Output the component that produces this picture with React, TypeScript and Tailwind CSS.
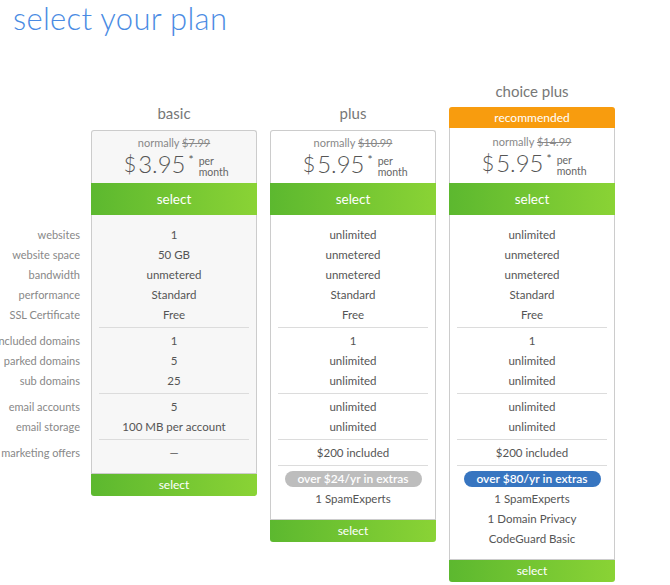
import React from "react";

type Cell = string | { badge: string; color: "gray" | "blue" };

const labels: string[][] = [
  ["websites", "website space", "bandwidth", "performance", "SSL Certificate"],
  ["included domains", "parked domains", "sub domains"],
  ["email accounts", "email storage"],
  ["marketing offers"],
];

const basicRows: Cell[][] = [
  ["1", "50 GB", "unmetered", "Standard", "Free"],
  ["1", "5", "25"],
  ["5", "100 MB per account"],
  ["—"],
];

const plusRows: Cell[][] = [
  ["unlimited", "unmetered", "unmetered", "Standard", "Free"],
  ["1", "unlimited", "unlimited"],
  ["unlimited", "unlimited"],
  ["$200 included"],
  [{ badge: "over $24/yr in extras", color: "gray" }, "1 SpamExperts"],
];

const choiceRows: Cell[][] = [
  ["unlimited", "unmetered", "unmetered", "Standard", "Free"],
  ["1", "unlimited", "unlimited"],
  ["unlimited", "unlimited"],
  ["$200 included"],
  [
    { badge: "over $80/yr in extras", color: "blue" },
    "1 SpamExperts",
    "1 Domain Privacy",
    "CodeGuard Basic",
  ],
];

function Divider() {
  return (
    <div className="h-[6px] pt-[2px] px-[7px]">
      <div className="h-px bg-[#dcdcdc]" />
    </div>
  );
}

function Rows({ groups }: { groups: Cell[][] }) {
  return (
    <div>
      {groups.map((g, gi) => (
        <React.Fragment key={gi}>
          {gi > 0 && <Divider />}
          {g.map((c, ci) =>
            typeof c === "string" ? (
              <div
                key={ci}
                className="h-[20px] flex items-center justify-center text-[11.5px] text-[#555]"
              >
                {c}
              </div>
            ) : (
              <div key={ci} className="h-[20px] flex items-center justify-center">
                <div
                  className={
                    c.color === "gray"
                      ? "w-[137px] h-[16px] rounded-full bg-[#bdbdbd] text-white text-[12px] font-semibold flex items-center justify-center"
                      : "w-[137px] h-[16px] rounded-full bg-[#3775c0] text-white text-[12px] font-semibold flex items-center justify-center"
                  }
                >
                  {c.badge}
                </div>
              </div>
            )
          )}
        </React.Fragment>
      ))}
    </div>
  );
}

function Price({ normal, price }: { normal: string; price: string }) {
  return (
    <div className="flex flex-col items-center">
      <div className="text-[11px] leading-[14px] text-[#888]">
        normally <span className="line-through">{normal}</span>
      </div>
      <div className="flex items-start mt-[1px] text-[#555] pl-[4px]">
        <span className="text-[22px] leading-[26px] font-light">$</span>
        <span className="text-[24px] leading-[26px] ml-[2px] font-light">{price}</span>
        <span className="text-[12px] leading-[12px] ml-[3px] mt-[3px]">*</span>
        <div className="flex flex-col ml-[5px] mt-[5px] text-[10.5px] leading-[10.5px] text-[#666]">
          <span>per</span>
          <span>month</span>
        </div>
      </div>
    </div>
  );
}

function SelectBtn({ tall }: { tall?: boolean }) {
  return (
    <div
      className={
        tall
          ? "h-[32px] flex items-center justify-center text-white text-[13.5px] bg-gradient-to-r from-[#5cb82f] to-[#8ad335]"
          : "h-[22px] flex items-center justify-center text-white text-[12px] bg-gradient-to-r from-[#5cb82f] to-[#8ad335] rounded-b-[3px]"
      }
    >
      select
    </div>
  );
}

export default function App() {
  return (
    <div
      className="w-[670px] h-[585px] bg-white overflow-hidden"
      style={{ fontFamily: "Lato, 'Open Sans', sans-serif" }}
    >
      <h1 className="pl-[13px] text-[31px] leading-[36px] font-light text-[#4a8be3] tracking-[0.3px]">
        select your plan
      </h1>
      <div className="flex items-start mt-[45px]">
        {/* labels */}
        <div className="w-[80px] pt-[144px] text-right">
          {labels.map((g, gi) => (
            <React.Fragment key={gi}>
              {gi > 0 && <div className="h-[6px]" />}
              {g.map((l) => (
                <div
                  key={l}
                  className="h-[20px] flex items-center justify-end text-[11px] text-[#888] whitespace-nowrap"
                >
                  {l}
                </div>
              ))}
            </React.Fragment>
          ))}
        </div>

        {/* basic */}
        <div className="ml-[11px] w-[166px] pt-[22px]">
          <div className="h-[20px] flex items-center justify-center text-[15px] text-[#777]">
            basic
          </div>
          <div className="mt-[7px]">
            <div className="h-[53px] border border-b-0 border-[#cccccc] rounded-t-[3px] bg-[#f7f7f7] pt-[5px]">
              <Price normal="$7.99" price="3.95" />
            </div>
            <SelectBtn tall />
            <div className="border border-t-0 border-[#cccccc] bg-[#f7f7f7] pt-[10px] pb-[10px]">
              <Rows groups={basicRows} />
            </div>
            <SelectBtn />
          </div>
        </div>

        {/* plus */}
        <div className="ml-[13px] w-[166px] pt-[22px]">
          <div className="h-[20px] flex items-center justify-center text-[15px] text-[#777]">
            plus
          </div>
          <div className="mt-[7px]">
            <div className="h-[53px] border border-b-0 border-[#cccccc] rounded-t-[3px] bg-white pt-[5px]">
              <Price normal="$10.99" price="5.95" />
            </div>
            <SelectBtn tall />
            <div className="border border-t-0 border-[#cccccc] bg-white pt-[10px] pb-[10px]">
              <Rows groups={plusRows} />
            </div>
            <SelectBtn />
          </div>
        </div>

        {/* choice plus */}
        <div className="ml-[13px] w-[166px]">
          <div className="h-[20px] flex items-center justify-center text-[15px] text-[#777]">
            choice plus
          </div>
          <div className="mt-[6px]">
            <div className="h-[21px] rounded-t-[3px] bg-[#f89c0e] flex items-center justify-center text-white text-[12px]">
              recommended
            </div>
            <div className="h-[55px] border-x border-[#cccccc] bg-white pt-[7px]">
              <Price normal="$14.99" price="5.95" />
            </div>
            <SelectBtn tall />
            <div className="border border-t-0 border-[#cccccc] bg-white pt-[10px] pb-[10px]">
              <Rows groups={choiceRows} />
            </div>
            <SelectBtn />
          </div>
        </div>
      </div>
    </div>
  );
}
